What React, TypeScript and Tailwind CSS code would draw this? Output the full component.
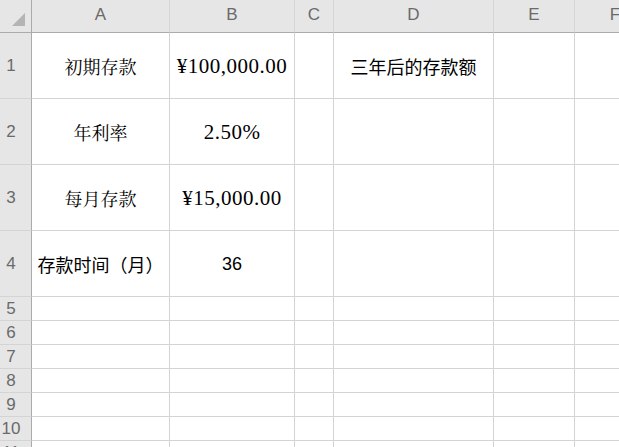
import React from "react";

const cols = [
  { label: "A", w: "w-[138px]" },
  { label: "B", w: "w-[125px]" },
  { label: "C", w: "w-[39px]" },
  { label: "D", w: "w-[160px]" },
  { label: "E", w: "w-[81px]" },
  { label: "F", w: "w-[81px]" },
];

const serif = "font-['Noto_Serif_CJK_SC','Liberation_Serif','Noto_Sans_CJK_SC',serif]";
const sans = "font-['Noto_Sans_CJK_SC','Liberation_Sans',sans-serif]";
const numSerif = "font-['Liberation_Serif',serif] text-[21px] tracking-[0.5px] text-[#111]";

type Cell = { text?: string; cls?: string };

const bigRows: Cell[][] = [
  [
    { text: "初期存款", cls: `${serif} text-[18px]` },
    { text: "¥100,000.00", cls: numSerif },
    {},
    { text: "三年后的存款额", cls: `${sans} text-[18px]` },
    {},
    {},
  ],
  [
    { text: "年利率", cls: `${serif} text-[18px]` },
    { text: "2.50%", cls: numSerif },
    {},
    {},
    {},
    {},
  ],
  [
    { text: "每月存款", cls: `${serif} text-[18px]` },
    { text: "¥15,000.00", cls: numSerif },
    {},
    {},
    {},
    {},
  ],
  [
    { text: "存款时间（月）", cls: `${sans} text-[18px]` },
    { text: "36", cls: "font-['Liberation_Sans',sans-serif] text-[18px]" },
    {},
    {},
    {},
    {},
  ],
];

function RowHeader({ n, h }: { n: number; h: string }) {
  return (
    <div
      className={`${h} w-[32px] shrink-0 bg-[#e6e6e6] border-r border-r-[#ababab] border-b border-b-[#d4d4d4] flex items-center pr-[9px] justify-center text-[17px] text-[#6a6a6a] font-['Liberation_Sans',sans-serif] leading-none`}
    >
      {n}
    </div>
  );
}

export default function App() {
  const smallRows = [5, 6, 7, 8, 9, 10, 11];
  return (
    <div className="w-[619px] h-[447px] overflow-hidden bg-white">
      <div className="flex flex-col w-max">
        {/* header */}
        <div className="flex h-[33px]">
          <div className="w-[32px] h-[33px] shrink-0 bg-[#e6e6e6] border-r border-r-[#ababab] border-b border-b-[#ababab] relative">
            <svg className="absolute left-[12px] top-[13px]" width="13" height="13" viewBox="0 0 13 13">
              <polygon points="13,0 13,13 0,13" fill="#b4b4b4" />
            </svg>
          </div>
          {cols.map((c) => (
            <div
              key={c.label}
              className={`${c.w} shrink-0 h-[33px] bg-[#e6e6e6] border-r border-r-[#d6d6d6] border-b border-b-[#ababab] flex items-center justify-center text-[17px] text-[#6a6a6a] font-['Liberation_Sans',sans-serif] pb-[2px]`}
            >
              {c.label}
            </div>
          ))}
        </div>
        {bigRows.map((row, i) => (
          <div key={i} className="flex h-[66px]">
            <RowHeader n={i + 1} h="h-[66px]" />
            {cols.map((c, j) => (
              <div
                key={c.label}
                className={`${c.w} shrink-0 h-[66px] border-r border-b border-[#d4d4d4] flex items-center justify-center whitespace-nowrap text-black pt-[2px] ${row[j].cls ?? ""}`}
              >
                {row[j].text}
              </div>
            ))}
          </div>
        ))}
        {smallRows.map((n) => (
          <div key={n} className="flex h-[24px]">
            <RowHeader n={n} h="h-[24px]" />
            {cols.map((c) => (
              <div key={c.label} className={`${c.w} shrink-0 h-[24px] border-r border-b border-[#d4d4d4]`} />
            ))}
          </div>
        ))}
      </div>
    </div>
  );
}
